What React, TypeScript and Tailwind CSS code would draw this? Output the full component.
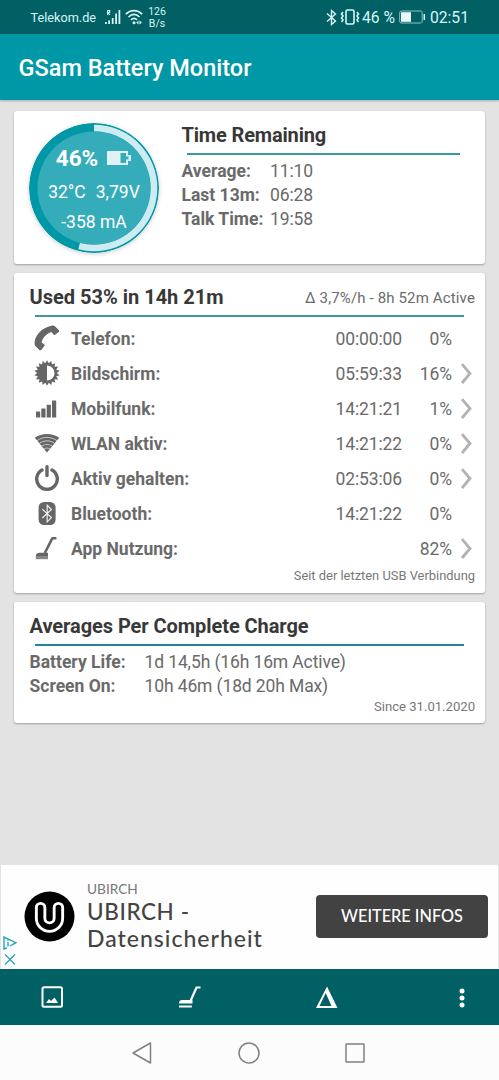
import React from "react";

function PhoneIcon() {
  return (
    <svg className="h-[26px] w-[26px]" viewBox="0 0 26 26" fill="#666">
      <path d="M.6 19.200C0 11.300 7.200 3 18 .6Q19.600.2 20.600 1L24.800 5Q25.600 5.900 24.800 6.900L21.600 9.600Q20.600 10.200 19.600 9.500L17.400 7C12.200 8.800 8.400 13 7.600 17.600L10.200 19.200Q11.100 20 10.300 21L7.300 24.900Q6.400 25.700 5.400 24.900L1.800 21.600Q.8 20.700.6 19.200Z" />
    </svg>
  );
}

function BrightnessIcon() {
  const points = Array.from({ length: 36 }, (_, i) => {
    const r = i % 2 === 0 ? 12.8 : 9.8;
    const a = (i * Math.PI) / 18;
    return `${13 + r * Math.sin(a)},${13 - r * Math.cos(a)}`;
  }).join(" ");
  return (
    <svg className="h-[26px] w-[26px]" viewBox="0 0 26 26">
      <polygon points={points} fill="#666" />
      <path d="M13 5.500a7.500 7.500 0 0 1 0 15Z" fill="#fff" />
    </svg>
  );
}

function CellIcon() {
  return (
    <svg className="h-[26px] w-[26px]" viewBox="0 0 26 26" fill="#666">
      <rect x="2" y="16.500" width="4.200" height="6" rx="0.5" />
      <rect x="7.300" y="13.500" width="4.200" height="9" rx="0.5" />
      <rect x="12.700" y="9.700" width="4.200" height="12.800" rx="0.5" />
      <rect x="18" y="5.500" width="4.200" height="17" rx="0.5" />
    </svg>
  );
}

function WlanIcon() {
  return (
    <svg className="h-[26px] w-[26px]" viewBox="0 0 26 26">
      <path d="M.8 7.700C8 2.700 18 2.700 25.200 7.700L13 22.500Z" fill="#666" />
      <g stroke="#fff" strokeWidth="0.9" fill="none" opacity="0.7">
        <path d="M3 10.700C9 6.300 17 6.300 23 10.700" />
        <path d="M5.200 13.500C10.200 10 15.800 10 20.800 13.500" />
        <path d="M7.600 16.300C11 13.900 15 13.900 18.400 16.300" />
        <path d="M10 19C12 17.700 14 17.700 16 19" />
      </g>
    </svg>
  );
}

function PowerIcon() {
  return (
    <svg className="h-[26px] w-[26px]" viewBox="0 0 26 26" fill="none" stroke="#666" strokeWidth="3.400" strokeLinecap="round">
      <path d="M13 1.700V10.500" />
      <path d="M8 5A10.300 10.300 0 1 0 18 5" />
    </svg>
  );
}

function BluetoothIcon() {
  return (
    <svg className="h-[26px] w-[26px]" viewBox="0 0 26 26">
      <rect x="4.600" y="2" width="17" height="23" rx="5.500" fill="#666" />
      <path d="M8.300 9.100L17.400 17.600L13.200 21.800V5.300L17.400 9.500L8.300 18" fill="none" stroke="#eee" strokeWidth="1.200" />
    </svg>
  );
}

function AppUsageIcon() {
  return (
    <svg className="h-[26px] w-[26px]" viewBox="0 0 26 26">
      <path d="M22.400 3.300H18.300L10.800 18" fill="none" stroke="#666" strokeWidth="2.600" strokeLinejoin="round" />
      <path d="M1.800 21Q1.800 18.300 5 17.800H14V21Z" fill="#666" />
      <rect x="1.800" y="21" width="12.200" height="3.200" fill="#888" />
    </svg>
  );
}

function Chevron() {
  return (
    <svg className="h-[22px] w-[14px]" viewBox="0 0 14 22" fill="none" stroke="#b2b2b2" strokeWidth="2.800">
      <path d="M2 1.200L10 10.500L2 20" />
    </svg>
  );
}

function StatusBar() {
  return (
    <div className="flex h-[34px] items-center bg-[#006064] text-[#d8f5f6]">
      <span className="ml-[30.500px] mt-px w-[74.500px] text-[12.700px] leading-4 whitespace-nowrap">Telekom.de</span>
      <svg className="h-[16px] w-[16px]" viewBox="0 0 16 16" fill="#d8f5f6">
        <path d="M0 13h1.800v2H0zM3.200 11.500h1.800V15H3.200zM6.800 9h1.800v6H6.800zM10.200 4.500H12V15h-1.800zM13.500 1h1.800v14h-1.800z" />
        <path d="M2.700 6V1.500H4.700V3.500H2.700L5 6" fill="none" stroke="#d8f5f6" strokeWidth="1.100" />
      </svg>
      <svg className="ml-[3.500px] h-[17px] w-[18px]" viewBox="0 0 18 17" fill="none" stroke="#d8f5f6" strokeWidth="1.700">
        <path d="M.8 5.200C5.500.4 12.500.4 17.200 5.200M3.500 8C7 4.600 11 4.600 14.500 8M6 10.800C8 9 10 9 12 10.800" />
        <circle cx="9" cy="13.800" r="1.500" fill="#d8f5f6" stroke="none" />
        <path d="M13.500 11.500v4L11.300 13.500ZM14.500 11.500v4L17 13.500Z" fill="#d8f5f6" stroke="none" />
      </svg>
      <span className="ml-[4.500px] mt-[2px] w-[20px] text-center text-[10.500px] leading-[12.500px]">
        126<br />B/s
      </span>
      <div className="ml-auto mr-[30px] flex items-center">
        <svg className="h-[17px] w-[11px]" viewBox="0 0 11 17" fill="none" stroke="#d8f5f6" strokeWidth="1.400">
          <path d="M1 4.500L9.500 12L5.500 15.500V1.500L9.500 5L1 12.500" />
        </svg>
        <svg className="ml-[3px] h-[16px] w-[20px]" viewBox="0 0 20 16" fill="none" stroke="#d8f5f6" strokeWidth="1.600">
          <rect x="6" y="1" width="8" height="14" rx="1.500" />
          <path d="M3 3L1.500 5L3 7L1.500 9L3 11L1.500 13M17 3L18.500 5L17 7L18.500 9L17 11L18.500 13" />
        </svg>
        <span className="ml-[1.500px] mt-px text-[15.700px] leading-5">46 %</span>
        <svg className="ml-[4px] h-[14px] w-[27px]" viewBox="0 0 27 14" fill="none" stroke="#8fc3c5">
          <rect x="0.700" y="1" width="22.500" height="12" rx="1.500" />
          <rect x="2" y="2.200" width="10" height="9.600" fill="#e8f7f7" stroke="none" />
          <path d="M25.300 4v6" stroke="#d8f5f6" strokeWidth="1.500" />
        </svg>
        <span className="ml-[4px] mt-px text-[15.700px] leading-5">02:51</span>
      </div>
    </div>
  );
}

function Gauge() {
  const end = (194.4 * Math.PI) / 180;
  const x = 65 + 60 * Math.sin(end);
  const y = 65 - 60 * Math.cos(end);
  return (
    <div className="ml-[15px] mt-[11.500px] grid h-[130px] w-[130px] shrink-0 text-white">
      <svg className="col-start-1 row-start-1 h-[130px] w-[130px] rounded-full shadow-[0_1px_4px_rgba(0,0,0,0.2)]" viewBox="0 0 130 130">
        <circle cx="65" cy="65" r="65" fill="#0097a7" />
        <circle cx="65" cy="65" r="56.500" fill="#35acb9" />
        <path d={`M65 5A60 60 0 1 1 ${x} ${y}`} fill="none" stroke="#cdebf1" strokeWidth="6.600" />
      </svg>
      <div className="z-10 col-start-1 row-start-1 flex flex-col items-center pt-[21px] whitespace-nowrap">
        <div className="mr-px flex h-7 items-center gap-[9px]">
          <span className="text-[22.500px] leading-7 font-bold">46%</span>
          <svg className="h-[16px] w-[24px]" viewBox="0 0 24 16" fill="#dff3f6">
            <path fillRule="evenodd" d="M0 1h21v4h3v6h-3v4H0ZM13.500 3V13H19V9.500H21.500V6.500H19V3Z" />
          </svg>
        </div>
        <div className="mt-[6px] flex gap-[10px] text-[17.500px] leading-7">
          <span>32°C</span>
          <span>3,79V</span>
        </div>
        <div className="mt-[2px] text-[17.500px] leading-7">-358 mA</div>
      </div>
    </div>
  );
}

function Pair({ label, value, labelClass }: { label: string; value: string; labelClass: string }) {
  return (
    <div className="flex h-6 items-center text-[17.500px] whitespace-nowrap text-[#6a6a6a]">
      <span className={labelClass}>{label}</span>
      <span className="tracking-[-0.120px]">{value}</span>
    </div>
  );
}

const rows: { icon: () => React.JSX.Element; label: string; time: string; pct: string; more: boolean }[] = [
  { icon: PhoneIcon, label: "Telefon:", time: "00:00:00", pct: "0%", more: false },
  { icon: BrightnessIcon, label: "Bildschirm:", time: "05:59:33", pct: "16%", more: true },
  { icon: CellIcon, label: "Mobilfunk:", time: "14:21:21", pct: "1%", more: true },
  { icon: WlanIcon, label: "WLAN aktiv:", time: "14:21:22", pct: "0%", more: true },
  { icon: PowerIcon, label: "Aktiv gehalten:", time: "02:53:06", pct: "0%", more: true },
  { icon: BluetoothIcon, label: "Bluetooth:", time: "14:21:22", pct: "0%", more: false },
  { icon: AppUsageIcon, label: "App Nutzung:", time: "", pct: "82%", more: true },
];

const card = "rounded-[3px] bg-white shadow-[0_1px_2px_rgba(0,0,0,0.3)]";

function AdBanner() {
  return (
    <div className="mx-px flex h-[104px] bg-[#fefefe]">
      <div className="flex w-[22px] flex-col justify-end pb-[2px] pl-[2px]">
        <svg className="h-[14px] w-[14px]" viewBox="0 0 14 14" fill="none" stroke="#22a5b8" strokeWidth="1.400">
          <path d="M4 11.800L1 13V1L13 6.700L7 10M5 6V10.500M5 3.400V4.800" />
        </svg>
        <svg className="mt-[3px] ml-px h-[14px] w-[12px]" viewBox="0 0 12 14" stroke="#22a5b8" strokeWidth="1.300">
          <path d="M1 1.500L11 11.500M11 1.500L1 11.500" />
        </svg>
      </div>
      <svg className="mt-[26px] ml-px h-[51px] w-[51px]" viewBox="0 0 51 51" fill="none" strokeLinecap="round">
        <circle cx="25.500" cy="25.500" r="25" fill="#000" />
        <path d="M16.600 16.600V27.200A8.900 8.900 0 0 0 34.400 27.200V16.600" stroke="#fff" strokeWidth="11.400" />
        <path d="M16.600 16.600V27.200A8.900 8.900 0 0 0 34.400 27.200V16.600" stroke="#000" strokeWidth="5.600" />
      </svg>
      <div className="ml-[12px] mt-[15px] w-[229px] font-['Lato'] whitespace-nowrap">
        <div className="text-[13.700px] leading-[18px] text-[#777]">UBIRCH</div>
        <div className="text-[22.500px] leading-[27px] font-medium tracking-[0.600px] text-[#444]">UBIRCH -</div>
        <div className="text-[23px] leading-[27px] font-medium tracking-[1.000px] text-[#444]">Datensicherheit</div>
      </div>
      <button className="mt-[30px] h-[43px] w-[172px] rounded-[4px] bg-[#424242] font-['Lato'] text-[16.300px] font-medium whitespace-nowrap text-white">
        WEITERE INFOS
      </button>
    </div>
  );
}

function BottomBar() {
  return (
    <div className="flex h-[56px] items-center bg-[#006064]">
      <svg className="ml-[41px] h-[22px] w-[22px]" viewBox="0 0 22 22" fill="none" stroke="#fff">
        <rect x="1.500" y="1.300" width="19.500" height="19.500" rx="1.500" strokeWidth="2" />
        <path d="M5 17L8 13L10 15L13.500 11.500L17 17Z" fill="#fff" stroke="none" />
      </svg>
      <svg className="ml-[115px] h-[24px] w-[24px]" viewBox="0 0 24 24" fill="none" stroke="#fff">
        <path d="M22.500 2.500H18.500L12.500 16" strokeWidth="2.200" />
        <path d="M1 18.500Q1 15 4 15H14.500V18.500ZM1 20.500H13.800V22.500H1Z" fill="#fff" stroke="none" />
      </svg>
      <svg className="ml-[114px] h-[23px] w-[22px]" viewBox="0 0 22 23">
        <path fillRule="evenodd" d="M11 .5L21.500 22H0ZM9.700 7L3.500 20H15.500Z" fill="#fff" />
      </svg>
      <svg className="ml-auto mr-[34px] mt-px h-[20px] w-[6px]" viewBox="0 0 6 20" fill="#fff">
        <circle cx="3" cy="3" r="2.500" />
        <circle cx="3" cy="10" r="2.500" />
        <circle cx="3" cy="17" r="2.500" />
      </svg>
    </div>
  );
}

function NavBar() {
  return (
    <div className="flex h-[55px] items-center justify-center bg-[#fcfcfc] pr-[2px]">
      <svg className="h-[22px] w-[20px]" viewBox="0 0 20 22" fill="none" stroke="#808080" strokeWidth="1.500" strokeLinejoin="round">
        <path d="M18.500 1V21L1 11Z" />
      </svg>
      <svg className="ml-[86px] h-[22px] w-[22px]" viewBox="0 0 22 22" fill="none" stroke="#808080" strokeWidth="1.500">
        <circle cx="11" cy="11" r="10" />
      </svg>
      <svg className="ml-[85px] h-[20px] w-[20px]" viewBox="0 0 20 20" fill="none" stroke="#808080" strokeWidth="1.500">
        <rect x="1" y="1" width="18" height="18" rx="0.5" />
      </svg>
    </div>
  );
}

export default function App() {
  return (
    <div className="flex h-[1080px] w-[499px] flex-col overflow-hidden bg-[#e3e3e3] font-['Roboto',sans-serif]">
      <StatusBar />
      <header className="flex h-[66px] items-center bg-[#0097a7] pt-[4px] pl-[18.500px] text-[23.500px] font-medium text-white shadow-[0_1px_2px_rgba(0,0,0,0.25)]">
        GSam Battery Monitor
      </header>

      <main className="flex flex-1 flex-col gap-[9px] px-[14px] pt-[11px]">
        <section className={`${card} flex h-[153px]`}>
          <Gauge />
          <div className="ml-[22.500px] pt-[12px]">
            <h2 className="text-[20px] leading-6 font-bold tracking-[-0.160px] text-[#383838]">Time Remaining</h2>
            <div className="mt-[6px] mb-[5px] ml-[5px] h-[1.500px] w-[273px] bg-[#3f989f]" />
            <Pair label="Average:" value="11:10" labelClass="w-[88.500px] font-bold" />
            <Pair label="Last 13m:" value="06:28" labelClass="w-[88.500px] font-bold" />
            <Pair label="Talk Time:" value="19:58" labelClass="w-[88.500px] font-bold" />
          </div>
        </section>

        <section className={`${card} flex h-[320px] flex-col pr-[10px] pl-[15.500px]`}>
          <div className="flex h-[42px] items-center justify-between pt-[6px] whitespace-nowrap">
            <h2 className="text-[20px] font-bold text-[#383838]">Used 53% in 14h 21m</h2>
            <span className="pt-[3px] text-[15px] tracking-[0.140px] text-[#6a6a6a]">Δ 3,7%/h - 8h 52m Active</span>
          </div>
          <div className="mb-[4px] ml-[5.500px] h-[2px] w-[429px] bg-[#3f989f]" />
          {rows.map(({ icon: Icon, label, time, pct, more }) => (
            <div key={label} className="flex h-[35px] items-center text-[17.500px] whitespace-nowrap text-[#6a6a6a]">
              <div className="ml-[4.500px] w-[37px] pb-[2px]"><Icon /></div>
              <span className="pt-[2px] font-bold">{label}</span>
              <span className="ml-auto pt-[2px] tracking-[-0.120px]">{time}</span>
              <span className="w-[50px] pt-[2px] text-right tracking-[-0.120px]">{pct}</span>
              <div className="ml-[8px] w-[15px]">{more && <Chevron />}</div>
            </div>
          ))}
          <div className="mt-[2px] text-right text-[12.900px] leading-4 text-[#777]">Seit der letzten USB Verbindung</div>
        </section>

        <section className={`${card} h-[121px] pt-[12px] pr-[10px] pl-[15.500px]`}>
          <h2 className="text-[20px] leading-6 font-bold tracking-[-0.060px] text-[#383838]">Averages Per Complete Charge</h2>
          <div className="mt-[6px] mb-[5px] ml-[5.500px] h-[1.500px] w-[429px] bg-[#24849a]" />
          <Pair label="Battery Life:" value="1d 14,5h (16h 16m Active)" labelClass="w-[115px] font-bold" />
          <Pair label="Screen On:" value="10h 46m (18d 20h Max)" labelClass="w-[115px] font-bold" />
          <div className="text-right text-[13.100px] leading-4 text-[#777]">Since 31.01.2020</div>
        </section>
      </main>

      <AdBanner />
      <BottomBar />
      <NavBar />
    </div>
  );
}
